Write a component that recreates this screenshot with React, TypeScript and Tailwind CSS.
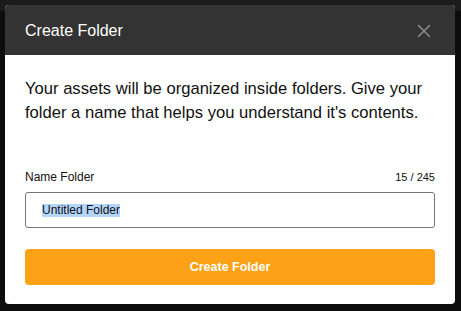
export default function App() {
  return (
    <div className="w-[461px] h-[311px] bg-[linear-gradient(to_bottom,#1b1b1b_0px,#1b1b1b_11px,#0c0c0c_11px)] p-[5px] pb-[7px] font-['Liberation_Sans',Arial,sans-serif]">
      <div className="w-[450px] h-[299px] rounded-[4px] overflow-hidden bg-white flex flex-col">
        <div className="h-[50px] bg-[#333333] flex items-center justify-between pl-[20px] pr-[24px] pt-[1px]">
          <span className="text-white text-[16px]">Create Folder</span>
          <svg width="14" height="14" viewBox="0 0 14 14" className="text-[#8a8a8a]">
            <path d="M1.5 1.5 L12.5 12.5 M12.5 1.5 L1.5 12.5" stroke="currentColor" strokeWidth="1.6" strokeLinecap="round" />
          </svg>
        </div>
        <div className="flex flex-col px-[20px] pt-[22px]">
          <p className="text-[16.6px] leading-[24px] text-[#111]">
            Your assets will be organized inside folders. Give your folder a name that helps you understand it's contents.
          </p>
          <div className="mt-[45px] flex items-end justify-between">
            <span className="text-[12px] leading-[14px] text-[#111]">Name Folder</span>
            <span className="text-[11px] leading-[13px] text-[#111]">15 / 245</span>
          </div>
          <div className="mt-[8px] h-[36px] border border-[#777] rounded-[3px] flex items-center pl-[16px]">
            <span className="bg-[#b4d5fe] text-[12px] text-[#111] leading-[13px]">Untitled Folder</span>
          </div>
          <div className="mt-[21px] h-[36px] rounded-[4px] bg-[#fda117] flex items-center justify-center">
            <span className="text-white text-[12.5px] font-bold">Create Folder</span>
          </div>
        </div>
      </div>
    </div>
  );
}
